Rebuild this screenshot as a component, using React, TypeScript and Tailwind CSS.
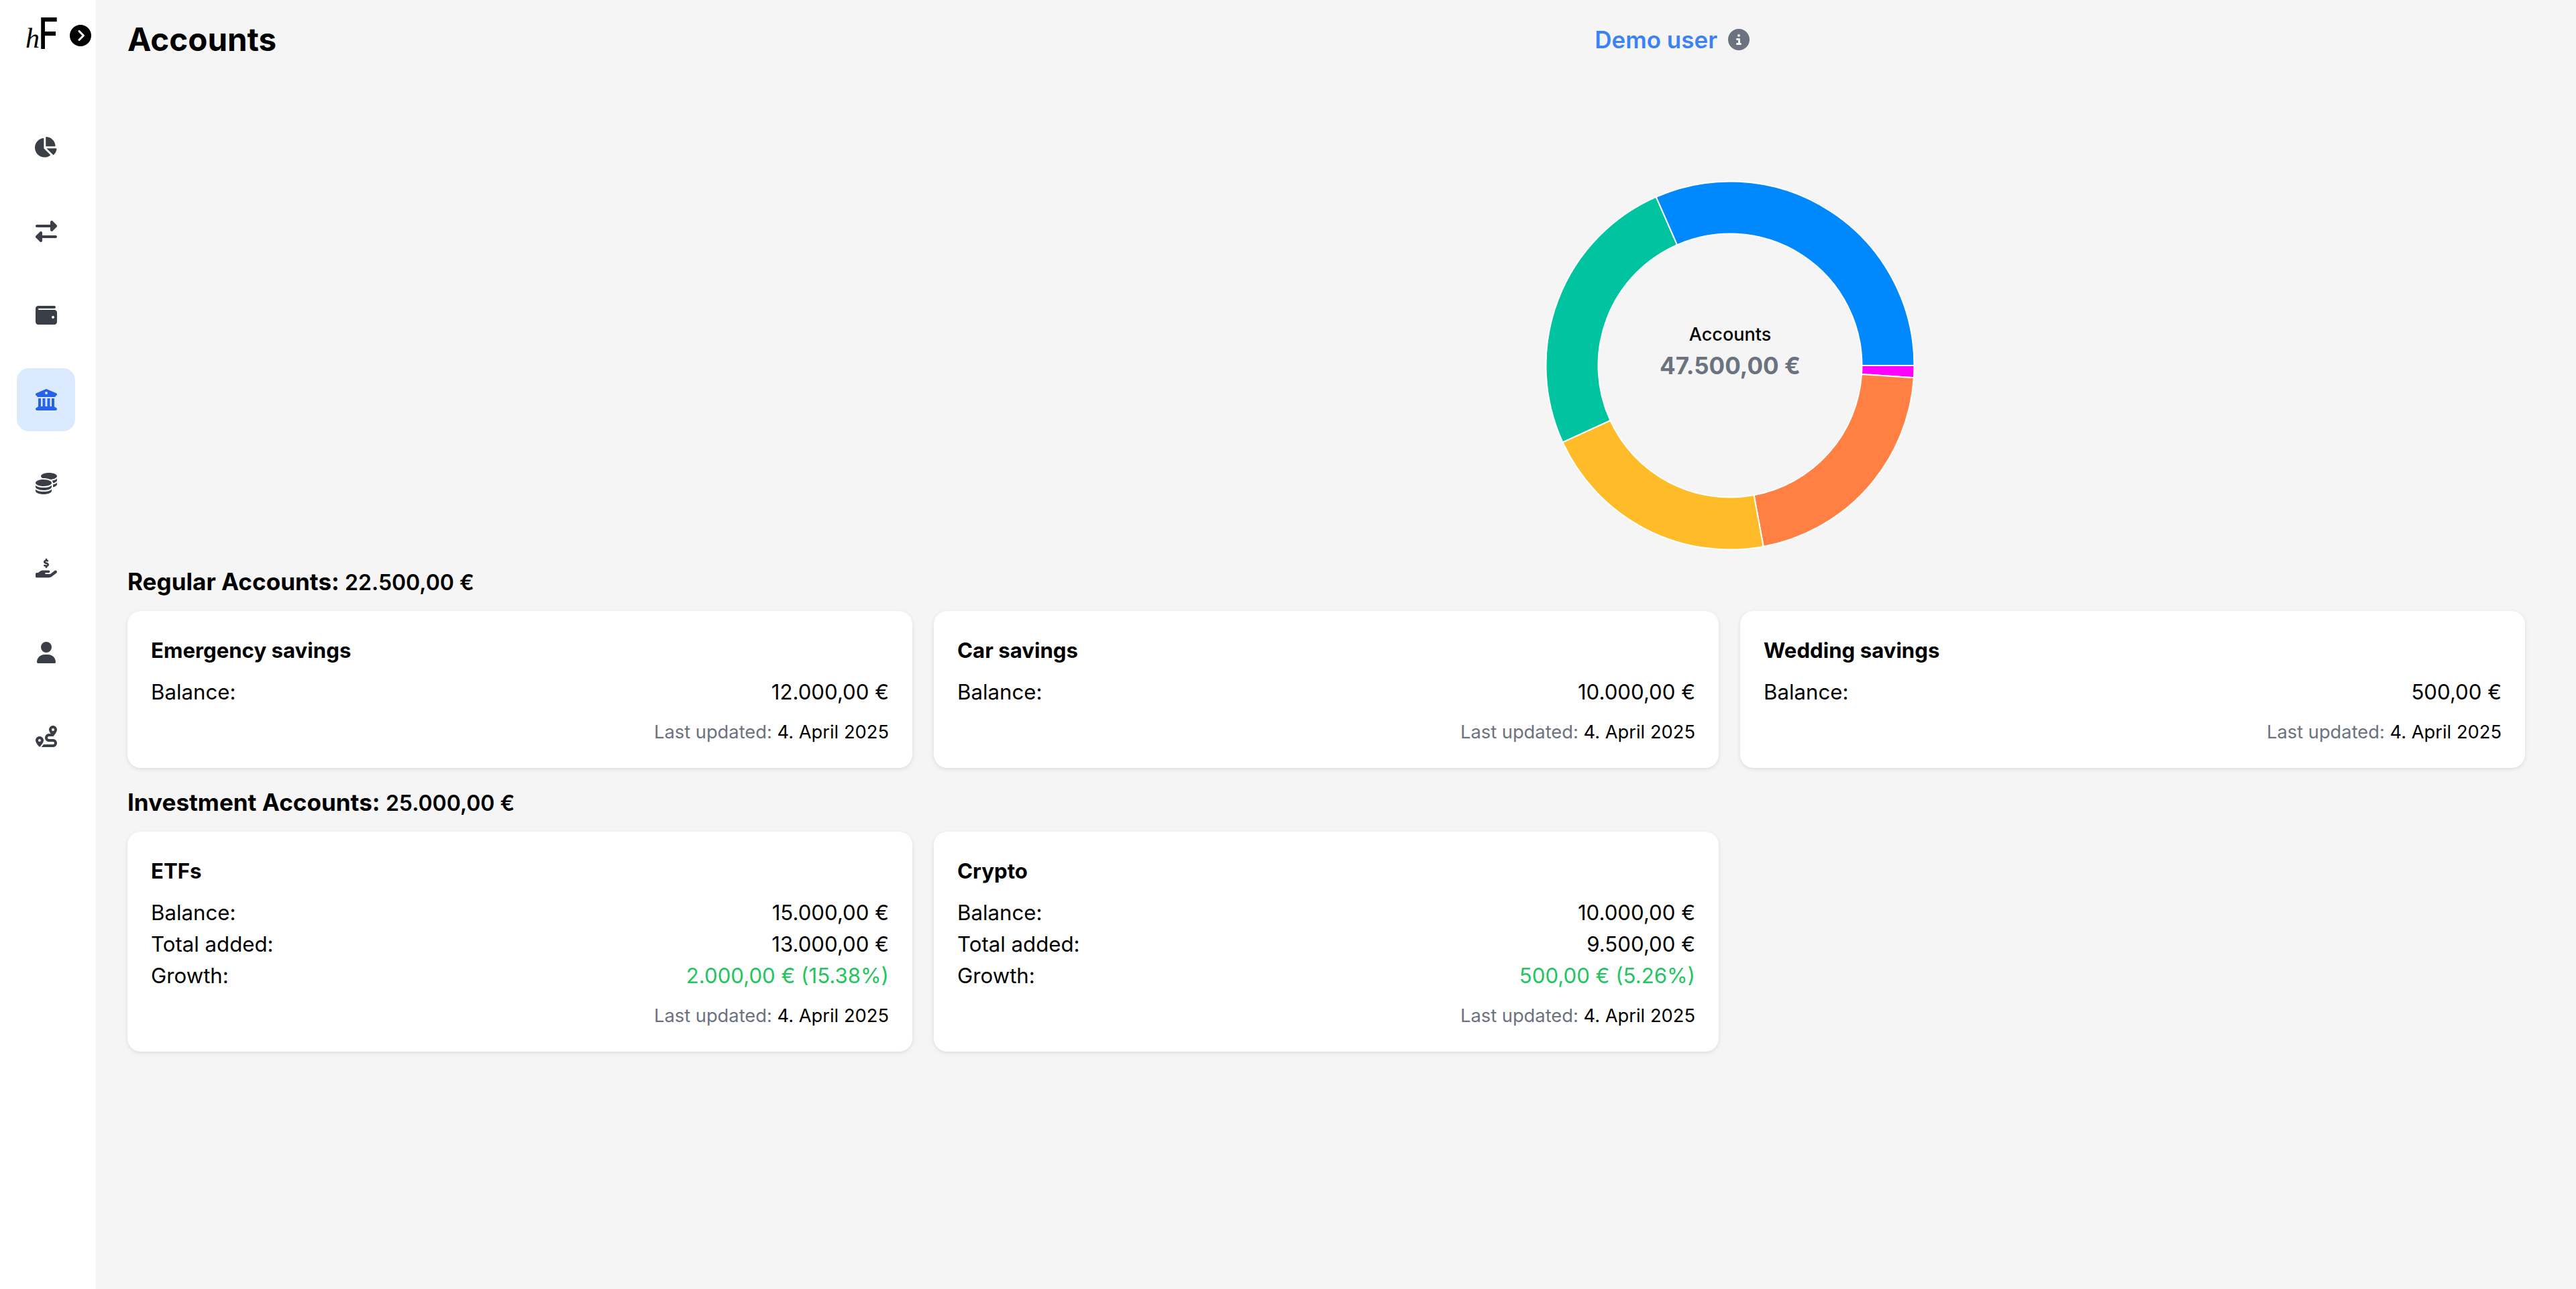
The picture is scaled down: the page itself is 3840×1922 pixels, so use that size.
import React from 'react';
import { FaChartPie } from 'react-icons/fa';
import {
  FaRightLeft,
  FaWallet,
  FaBuildingColumns,
  FaCoins,
  FaHandHoldingDollar,
  FaUser,
  FaRoute,
  FaCircleChevronRight,
  FaCircleInfo,
} from 'react-icons/fa6';

const navItems = [
  { icon: FaChartPie, size: 'w-[32.5px] h-auto' },
  { icon: FaRightLeft, size: 'h-[32px] w-auto' },
  { icon: FaWallet, size: 'h-[32px] w-auto' },
  { icon: FaBuildingColumns, size: 'h-[32px] w-auto', active: true },
  { icon: FaCoins, size: 'h-[32px] w-auto' },
  { icon: FaHandHoldingDollar, size: 'h-[32px] w-auto' },
  { icon: FaUser, size: 'h-[32px] w-auto' },
  { icon: FaRoute, size: 'h-[32px] w-auto' },
];

const slices = [
  { value: 500, color: '#ff00ff' },
  { value: 10000, color: '#ff8042' },
  { value: 10000, color: '#ffbb28' },
  { value: 12000, color: '#00c49f' },
  { value: 15000, color: '#0088fe' },
];

type Row = { label: string; value: string; green?: boolean };
type Account = { name: string; rows: Row[] };

const regular: Account[] = [
  { name: 'Emergency savings', rows: [{ label: 'Balance:', value: '12.000,00 €' }] },
  { name: 'Car savings', rows: [{ label: 'Balance:', value: '10.000,00 €' }] },
  { name: 'Wedding savings', rows: [{ label: 'Balance:', value: '500,00 €' }] },
];

const investment: Account[] = [
  {
    name: 'ETFs',
    rows: [
      { label: 'Balance:', value: '15.000,00 €' },
      { label: 'Total added:', value: '13.000,00 €' },
      { label: 'Growth:', value: '2.000,00 € (15.38%)', green: true },
    ],
  },
  {
    name: 'Crypto',
    rows: [
      { label: 'Balance:', value: '10.000,00 €' },
      { label: 'Total added:', value: '9.500,00 €' },
      { label: 'Growth:', value: '500,00 € (5.26%)', green: true },
    ],
  },
];

function slicePath(start: number, end: number) {
  const [cx, cy, R, r] = [280, 280, 274.5, 196.5];
  const pt = (rad: number, a: number) => `${cx + rad * Math.cos(a)} ${cy + rad * Math.sin(a)}`;
  const large = end - start > Math.PI ? 1 : 0;
  return `M${pt(R, start)} A${R} ${R} 0 ${large} 1 ${pt(R, end)} L${pt(r, end)} A${r} ${r} 0 ${large} 0 ${pt(r, start)} Z`;
}

function Donut() {
  const total = slices.reduce((s, x) => s + x.value, 0);
  let angle = 0;
  return (
    <div className="relative w-[560px] h-[560px]">
      <svg viewBox="0 0 560 560" className="w-[560px] h-[560px]">
        {slices.map((s, i) => {
          const start = angle;
          angle += (s.value / total) * Math.PI * 2;
          return <path key={i} d={slicePath(start, angle)} fill={s.color} stroke="#ffffff" strokeWidth={2} />;
        })}
      </svg>
      <div className="absolute inset-0 flex flex-col items-center justify-center pb-[47px]">
        <span className="text-[27px] leading-[47px] font-medium text-black">Accounts</span>
        <span className="text-[35px] leading-[47px] font-bold text-[#6b7280]">47.500,00 €</span>
      </div>
    </div>
  );
}

function AccountCard({ account }: { account: Account }) {
  return (
    <div className="bg-white rounded-[20px] p-[35px] shadow-[0_2px_6px_rgba(0,0,0,0.1)]">
      <h3 className="text-[31.2px] leading-[48px] font-bold text-black mb-[15px]">{account.name}</h3>
      {account.rows.map((row) => (
        <div key={row.label} className="flex justify-between text-[31.2px] leading-[47px] text-black">
          <span>{row.label}</span>
          <span className={row.green ? 'text-[#22c55e]' : ''}>{row.value}</span>
        </div>
      ))}
      <p className="mt-[18px] text-right text-[27.3px] leading-[36px] text-[#6b7280]">
        Last updated: <span className="text-black">4. April 2025</span>
      </p>
    </div>
  );
}

function SectionHeading({ title, total }: { title: string; total: string }) {
  return (
    <h2 className="text-[35.1px] leading-[48px] font-bold text-black mb-[18px]">
      {title} <span className="text-[32px] font-semibold">{total}</span>
    </h2>
  );
}

export default function App() {
  return (
    <div className="flex min-h-screen bg-[#f5f5f5] font-['Inter',sans-serif]">
      <aside className="w-[143px] shrink-0 bg-white">
        <div className="relative h-[172px]">
          <span className="absolute left-[38px] top-[36px] font-['Liberation_Serif',serif] italic text-[42px] leading-[42px] text-black">h</span>
          <span className="absolute left-[57px] top-[14px] origin-left scale-x-[0.8] font-medium text-[65px] leading-[72px] text-black">F</span>
          <FaCircleChevronRight className="absolute left-[104px] top-[37px] w-[32px] h-[32px] text-black" />
        </div>
        <nav className="flex flex-col items-start gap-[31.6px] pl-[25px]">
          {navItems.map((item, i) => {
            const Icon = item.icon;
            return (
              <div
                key={i}
                className={`w-[87px] h-[94px] rounded-[18px] flex items-center justify-center ${item.active ? 'bg-[#dbeafe] text-[#2563eb]' : 'text-[#3a3f47]'}`}
              >
                <Icon className={item.size} />
              </div>
            );
          })}
        </nav>
      </aside>

      <main className="flex-1 pl-[47px] pr-[76px]">
        <header className="relative h-[118px] flex items-center">
          <h1 className="text-[47.5px] leading-[60px] font-bold text-black">Accounts</h1>
          <div className="ml-[1965px] flex items-center gap-[16px]">
            <span className="text-[35px] leading-[48px] font-semibold text-[#3b82f6]">Demo user</span>
            <FaCircleInfo className="w-[32px] h-[32px] text-[#6b7280]" />
          </div>
        </header>

        <div className="mt-[147px] pl-[2109px]">
          <Donut />
        </div>

        <div className="mt-[18px]">
          <SectionHeading title="Regular Accounts:" total="22.500,00 €" />
          <div className="grid grid-cols-3 gap-[32px]">
            {regular.map((a) => (
              <AccountCard key={a.name} account={a} />
            ))}
          </div>
        </div>

        <div className="mt-[27px]">
          <SectionHeading title="Investment Accounts:" total="25.000,00 €" />
          <div className="grid grid-cols-3 gap-[32px]">
            {investment.map((a) => (
              <AccountCard key={a.name} account={a} />
            ))}
          </div>
        </div>
      </main>
    </div>
  );
}
